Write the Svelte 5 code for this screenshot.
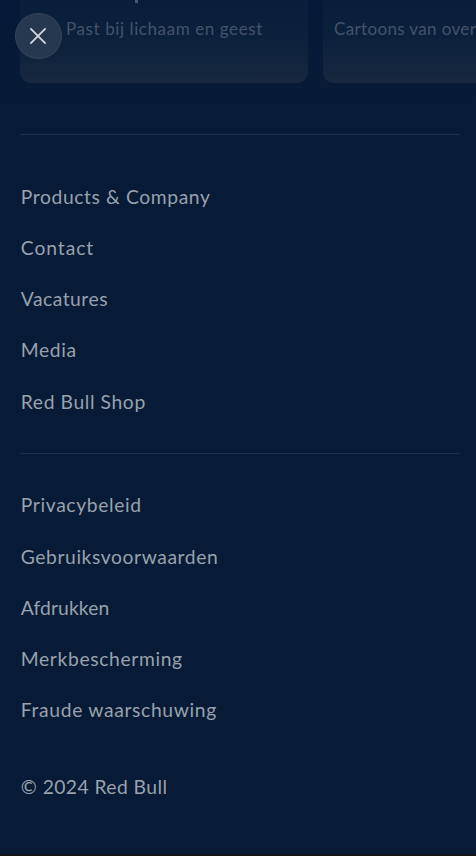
<script>
  const primary = [
    { label: 'Products & Company', track: 0.6 },
    { label: 'Contact', track: 0.93 },
    { label: 'Vacatures', track: 0.5 },
    { label: 'Media', track: 0.62 },
    { label: 'Red Bull Shop', track: 0.6 },
  ];
  const legal = [
    { label: 'Privacybeleid', track: 0.64 },
    { label: 'Gebruiksvoorwaarden', track: 0.58 },
    { label: 'Afdrukken', track: 0.1 },
    { label: 'Merkbescherming', track: 0.64 },
    { label: 'Fraude waarschuwing', track: 0.66 },
  ];
</script>

<div class="menu">
  <div class="cards">
    <article class="card first">
      <i class="descender"></i>
      <p style="letter-spacing: 0.59px">Past bij lichaam en geest</p>
    </article>
    <article class="card second">
      <p style="letter-spacing: 0.36px">Cartoons van over</p>
    </article>
  </div>

  <button class="close" aria-label="Sluiten">
    <svg width="18" height="18" viewBox="0 0 18 18" fill="none" stroke="#d6dae0" stroke-width="1.7">
      <path d="M1.4 1.4 16.6 16.6M16.6 1.4 1.4 16.6" />
    </svg>
  </button>

  <nav class="primary">
    {#each primary as item}
      <a href="#top" style="letter-spacing: {item.track}px">{item.label}</a>
    {/each}
  </nav>
  <nav class="legal">
    {#each legal as item}
      <a href="#top" style="letter-spacing: {item.track}px">{item.label}</a>
    {/each}
  </nav>
  <footer>© 2024 Red Bull</footer>
</div>

<style>
  :global(body) {
    background: #071b36;
    overflow: hidden;
  }
  .menu {
    position: relative;
    box-sizing: border-box;
    width: 476px;
    height: 856px;
    overflow: hidden;
    padding: 0 16px 0 20px;
    background: linear-gradient(#051a38, #071b36 110px);
    border-bottom: 2px solid #151518;
    font-family: Lato, 'Liberation Sans', sans-serif;
    color: #98a1ad;
  }
  .cards {
    display: flex;
    gap: 15px;
    width: 591px;
    height: 83px;
  }
  .card {
    position: relative;
    box-sizing: border-box;
    flex: 0 0 288px;
    height: 83px;
    padding-top: 17px;
    border-radius: 0 0 11px 11px;
    background: linear-gradient(#091e3a, #0b203b 35px, #17283f);
    overflow: hidden;
  }
  .first { padding-left: 46px; }
  .second { padding-left: 11px; }
  .card p {
    margin: 0;
    font-size: 17px;
    line-height: 24px;
    white-space: nowrap;
    color: #44536a;
  }
  .descender {
    position: absolute;
    left: 115px;
    top: 0;
    width: 3px;
    height: 3px;
    background: #4a596e;
  }
  .close {
    position: absolute;
    left: 15px;
    top: 13px;
    box-sizing: border-box;
    width: 47px;
    height: 46px;
    padding: 0 1px 0 0;
    border: 1.5px solid #34445a;
    border-radius: 50%;
    background: #26384f;
    display: flex;
    align-items: center;
    justify-content: center;
  }
  nav {
    display: flex;
    flex-direction: column;
    border-top: 1px solid #1e3049;
  }
  .primary {
    height: 269.4px;
    margin-top: 51px;
    padding-top: 48.6px;
  }
  .legal {
    padding-top: 38.3px;
  }
  a, footer {
    padding-left: 0.8px;
    font-size: 19.3px;
    line-height: 26px;
    white-space: nowrap;
    color: inherit;
    text-decoration: none;
  }
  a { height: 26px; margin-bottom: 25.25px; }
  footer {
    margin-top: 25.2px;
    letter-spacing: 0.43px;
  }
</style>
